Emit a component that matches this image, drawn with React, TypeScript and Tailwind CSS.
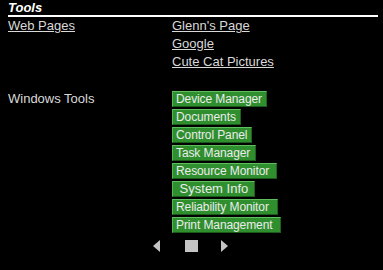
import React from "react";

const webLinks = ["Glenn's Page", "Google", "Cute Cat Pictures"];

const tools = [
  { label: "Device Manager", w: "w-[95px]" },
  { label: "Documents", w: "w-[69px]" },
  { label: "Control Panel", w: "w-[80px]" },
  { label: "Task Manager", w: "w-[84px]" },
  { label: "Resource Monitor", w: "w-[105px]" },
  { label: "\u00a0System Info", w: "w-[83px]", big: true },
  { label: "Reliability Monitor", w: "w-[106px]" },
  { label: "Print Management", w: "w-[109px]" },
];

function ToolButton({ label, w, big }: { label: string; w: string; big?: boolean }) {
  return (
    <button
      className={`${w} h-[16px] mb-[2px] block whitespace-nowrap overflow-hidden bg-[#2f8f2f] border border-t-[#5fbf5f] border-l-[#55b455] border-b-[#1c5a1c] border-r-[#1f611f] pl-[3px] pr-0 text-left leading-[14px] text-[#ececec] ${
        big ? "text-[13px]" : "text-[12px] tracking-[-0.1px]"
      }`}
    >
      {label}
    </button>
  );
}

export default function App() {
  return (
    <div className="w-[383px] h-[270px] bg-black font-['Liberation_Sans',Arial,sans-serif] text-[13px] text-[#d9d9d9] overflow-hidden">
      <div className="pl-2 pr-[5px]">
        {/* Title */}
        <div className="h-[17px] border-b-2 border-white">
          <span className="font-bold italic text-white leading-[15px] block">Tools</span>
        </div>

        {/* Web pages */}
        <div className="flex">
          <div className="w-[164px] leading-[18px]">
            <a className="underline">Web Pages</a>
          </div>
          <div className="flex flex-col leading-[18px]">
            {webLinks.map((l) => (
              <a key={l} className="underline">
                {l}
              </a>
            ))}
          </div>
        </div>

        {/* Windows tools */}
        <div className="flex mt-[20px]">
          <div className="w-[164px] leading-[16px]">Windows Tools</div>
          <div className="flex flex-col">
            {tools.map((t) => (
              <ToolButton key={t.label} {...t} />
            ))}
          </div>
        </div>

        {/* Pager */}
        <div className="flex items-center pl-[145px] mt-[5px]">
          <svg width="7" height="12" viewBox="0 0 7 12">
            <polygon points="7,0 0,6 7,12" fill="#c4c4c4" />
          </svg>
          <div className="ml-[25px] w-[13px] h-[12px] bg-[#c4c4c4]" />
          <svg className="ml-[23px]" width="7" height="12" viewBox="0 0 7 12">
            <polygon points="0,0 7,6 0,12" fill="#c4c4c4" />
          </svg>
        </div>
      </div>
    </div>
  );
}
